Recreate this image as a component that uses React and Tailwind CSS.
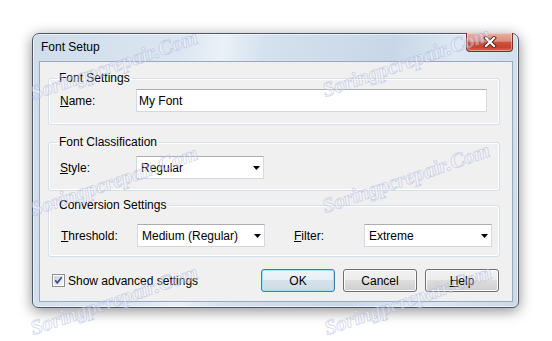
import React from "react"

const marks = [
  "left-[114px] top-[65px]",
  "left-[406px] top-[62px]",
  "left-[114px] top-[181px]",
  "left-[406px] top-[178px]",
  "left-[114px] top-[300px]",
  "left-[408px] top-[300px]",
]

function Dropdown({ value }) {
  return (
    <div className="flex h-[23px] w-[128px] items-center justify-between border border-[#d5d8de] border-t-[#abadb3] bg-white pl-[4px] pr-[3px]">
      <span>{value}</span>
      <svg width="7" height="4" viewBox="0 0 7 4">
        <path d="M0 0h7L3.5 4z" fill="#000" />
      </svg>
    </div>
  )
}

function Group({ title, className, children }) {
  return (
    <fieldset
      className={`ml-[8px] mr-[12px] rounded-[3px] border border-[#d5dfe5] shadow-[inset_0_0_0_1px_#ffffff] ${className}`}
    >
      <legend className="ml-[8px] px-[2px] leading-[16px]">{title}</legend>
      {children}
    </fieldset>
  )
}

export default function App() {
  return (
    <div className="relative h-[341px] w-[552px] overflow-hidden bg-white font-['Liberation_Sans',Arial,sans-serif] text-[12px] leading-[16px] text-black">
      <div className="pl-[32px] pt-[33px]">
        <div className="flex h-[275px] w-[487px] flex-col rounded-t-[7px] rounded-b-[6px] border border-[#4f5866] bg-[linear-gradient(100deg,#cfdcea_0%,#dbe6f1_28%,#eaf1f8_36%,#d4e1ee_44%,#c8d7e7_68%,#dde8f3_80%,#cbd9e8_100%)] shadow-[0_3px_14px_rgba(0,0,0,0.45),inset_0_0_0_1px_rgba(255,255,255,0.55)]">
          <div className="flex h-[27px] items-start justify-between">
            <span className="pl-[8px] pt-[5px]">Font Setup</span>
            <button className="-mt-px mr-[5px] flex h-[19px] w-[47px] items-center justify-center rounded-b-[4px] border border-t-0 border-[#7a3226] bg-[linear-gradient(#eab0a2_0%,#de8d7b_45%,#cb543d_52%,#c5432d_80%,#d8705a_100%)] shadow-[inset_0_0_0_1px_rgba(255,255,255,0.35)]">
              <svg width="14" height="12" viewBox="0 0 14 12">
                <path d="M3 2l8 8M11 2l-8 8" stroke="#5a1f16" strokeWidth="4" strokeLinecap="square" />
                <path d="M3 2l8 8M11 2l-8 8" stroke="#ffffff" strokeWidth="2.2" strokeLinecap="square" />
              </svg>
            </button>
          </div>

          <div className="mb-[5px] ml-[6px] mr-[5px] flex-1 border border-[#98a9bc] bg-[#f0f0f0]">
            <Group title="Font Settings" className="mt-[8px]">
              <div className="flex items-center pb-[12px] pl-[11px] pt-[3px]">
                <span className="w-[76px]">
                  <u>N</u>ame:
                </span>
                <div className="flex h-[23px] w-[351px] items-center border border-[#d5d8de] border-t-[#abadb3] bg-white pl-[2px]">
                  My Font
                </div>
              </div>
            </Group>

            <Group title="Font Classification" className="mt-[9px]">
              <div className="flex items-center pb-[11px] pl-[11px] pt-[6px]">
                <span className="w-[76px]">
                  <u>S</u>tyle:
                </span>
                <Dropdown value="Regular" />
              </div>
            </Group>

            <Group title="Conversion Settings" className="mt-[6px]">
              <div className="flex items-center pb-[9px] pl-[12px] pt-[11px]">
                <span className="w-[76px]">
                  <u>T</u>hreshold:
                </span>
                <Dropdown value="Medium (Regular)" />
                <span className="ml-[29px] w-[70px]">
                  <u>F</u>ilter:
                </span>
                <Dropdown value="Extreme" />
              </div>
            </Group>

            <div className="mt-[12px] flex items-center justify-between pl-[12px] pr-[13px]">
              <label className="flex items-center gap-[3px]">
                <svg width="13" height="13" viewBox="0 0 13 13">
                  <defs>
                    <linearGradient id="cb" x1="0" y1="0" x2="1" y2="1">
                      <stop offset="0" stopColor="#cbcfd5" />
                      <stop offset="1" stopColor="#f6f6f6" />
                    </linearGradient>
                  </defs>
                  <rect x="0.5" y="0.5" width="12" height="12" fill="#fff" stroke="#8e8f8f" />
                  <rect x="2" y="2" width="9" height="9" fill="url(#cb)" />
                  <path d="M3.2 6.3l2.1 2.6 4.4-5.6" fill="none" stroke="#3a4d86" strokeWidth="1.7" />
                </svg>
                <span>Show advanced settings</span>
              </label>

              <div className="flex gap-[8px]">
                <button className="h-[23px] w-[74px] rounded-[3px] border border-[#3c7fb1] bg-[linear-gradient(#f0f5f9_0%,#e6eef4_50%,#d7e3ec_50%,#cddbe6_100%)] shadow-[inset_0_0_0_1px_#a6dcf6]">
                  OK
                </button>
                <button className="h-[23px] w-[74px] rounded-[3px] border border-[#707070] bg-[linear-gradient(#f2f2f2_0%,#ebebeb_50%,#dddddd_50%,#cfcfcf_100%)] shadow-[inset_0_0_0_1px_#fcfcfc]">
                  Cancel
                </button>
                <button className="h-[23px] w-[74px] rounded-[3px] border border-[#707070] bg-[linear-gradient(#f2f2f2_0%,#ebebeb_50%,#dddddd_50%,#cfcfcf_100%)] shadow-[inset_0_0_0_1px_#fcfcfc]">
                  <u>H</u>elp
                </button>
              </div>
            </div>
          </div>
        </div>
      </div>

      {marks.map((pos) => (
        <span
          key={pos}
          className={`pointer-events-none absolute ${pos} -translate-x-1/2 -translate-y-1/2 rotate-[-19deg] whitespace-nowrap font-['Liberation_Serif',serif] text-[21px] font-bold italic text-white/60 opacity-60 [-webkit-text-stroke:0.7px_#aeb6e0]`}
        >
          Soringpcrepair.Com
        </span>
      ))}
    </div>
  )
}
